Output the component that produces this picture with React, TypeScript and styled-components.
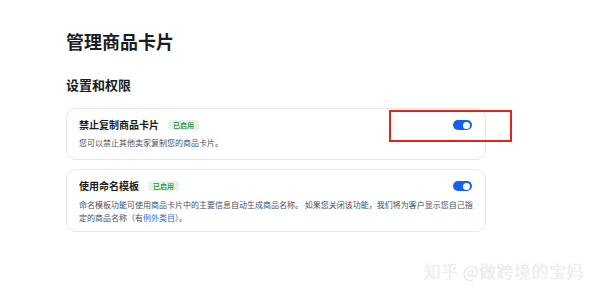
import * as React from 'react'
import styled, { createGlobalStyle } from 'styled-components'

const GlobalStyle = createGlobalStyle`
  html, body {
    margin: 0;
    padding: 0;
    background: #ffffff;
  }
  body {
    font-family: "Noto Sans CJK SC", "Noto Sans", sans-serif;
    color: #1f2329;
  }
`

const Page = styled.div`
  position: relative;
  width: 600px;
  height: 302px;
  box-sizing: border-box;
  padding: 28px 0 0 66px;
  overflow: hidden;
`

const Title = styled.h1`
  margin: 0;
  font-size: 18px;
  line-height: 26px;
  font-weight: 700;
  color: #1a1d21;
`

const SectionTitle = styled.h2`
  margin: 22px 0 14px;
  font-size: 13px;
  line-height: 18px;
  font-weight: 700;
  color: #1a1d21;
`

const CardList = styled.div`
  display: flex;
  flex-direction: column;
  gap: 9px;
  width: 420px;
`

const Card = styled.div<{ $padBottom: number }>`
  box-sizing: border-box;
  border: 1px solid #e6e8eb;
  border-radius: 10px;
  padding: 9px 13px ${({ $padBottom }) => $padBottom}px 12px;
  background: #fff;
`

const CardHeader = styled.div`
  display: flex;
  align-items: center;
  justify-content: space-between;
`

const CardTitleRow = styled.div`
  display: flex;
  align-items: center;
`

const CardTitle = styled.span`
  font-size: 10px;
  line-height: 14px;
  font-weight: 700;
  color: #1a1d21;
`

const Badge = styled.span`
  margin-left: 9px;
  height: 10px;
  padding: 0 5px;
  border-radius: 3px;
  background: #e2f5e6;
  color: #198a3c;
  font-size: 7px;
  line-height: 10px;
  font-weight: 500;
`

const Description = styled.p<{ $gap: number }>`
  margin: ${({ $gap }) => $gap}px -4px 0 0;
  font-size: 8px;
  line-height: 13px;
  color: #4a4f57;
`

const Link = styled.span`
  color: #2a66e8;
`

const Toggle = styled.span<{ $on: boolean }>`
  position: relative;
  width: 19px;
  height: 10px;
  border-radius: 5px;
  background: ${({ $on }) => ($on ? '#1560f0' : '#c9ccd1')};
  &::after {
    content: '';
    position: absolute;
    top: 1.5px;
    ${({ $on }) => ($on ? 'right: 2px;' : 'left: 2px;')}
    width: 7px;
    height: 7px;
    border-radius: 50%;
    background: #fff;
  }
`

const Highlight = styled.div`
  position: absolute;
  left: 389px;
  top: 110px;
  width: 123px;
  height: 32px;
  box-sizing: border-box;
  border: 2px solid #e3241b;
`

const Watermark = styled.div`
  position: absolute;
  right: 16px;
  bottom: 21px;
  font-size: 17px;
  line-height: 20px;
  font-weight: 300;
  color: #f3f3f3;
  text-shadow: 0 0 1px rgba(0, 0, 0, 0.2);
  letter-spacing: 0.5px;
`

export default function App () {
  return (
    <>
      <GlobalStyle />
      <Page>
        <Title>管理商品卡片</Title>
        <SectionTitle>设置和权限</SectionTitle>
        <CardList>
          <Card $padBottom={10}>
            <CardHeader>
              <CardTitleRow>
                <CardTitle>禁止复制商品卡片</CardTitle>
                <Badge>已启用</Badge>
              </CardTitleRow>
              <Toggle $on />
            </CardHeader>
            <Description $gap={4}>您可以禁止其他卖家复制您的商品卡片。</Description>
          </Card>
          <Card $padBottom={7}>
            <CardHeader>
              <CardTitleRow>
                <CardTitle>使用命名模板</CardTitle>
                <Badge>已启用</Badge>
              </CardTitleRow>
              <Toggle $on />
            </CardHeader>
            <Description $gap={5}>
              命名模板功能可使用商品卡片中的主要信息自动生成商品名称。 如果您关闭该功能，我们将为客户显示您自己指<br />定的商品名称（有<Link>例外类目</Link>）。
            </Description>
          </Card>
        </CardList>
        <Highlight />
        <Watermark>知乎 @做跨境的宝妈</Watermark>
      </Page>
    </>
  )
}
